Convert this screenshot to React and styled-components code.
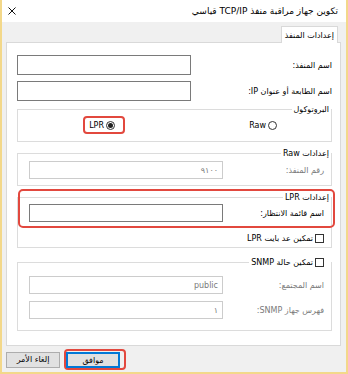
import React from 'react'
import styled, { createGlobalStyle } from 'styled-components'

const Global = createGlobalStyle`
  html, body {
    margin: 0;
    padding: 0;
    background: #ffffff;
    overflow: hidden;
  }
  * { box-sizing: border-box; }
`

const FONT = `Tahoma, "DejaVu Sans", "Liberation Sans", sans-serif`

export default function App() {
  return (
    <>
      <Global />
      <Window dir="rtl">
        <TitleBar>
          <Title>تكوين جهاز مراقبة منفذ TCP/IP قياسي</Title>
          <svg width="8" height="8" viewBox="0 0 8 8">
            <path d="M0.5 0.5 L7.5 7.5 M7.5 0.5 L0.5 7.5" stroke="#111" strokeWidth="1" />
          </svg>
        </TitleBar>

        <Body>
          <TabStrip>
            <Tab>إعدادات المنفذ</Tab>
          </TabStrip>

          <Panel>
            <FieldRow>
              <Label>اسم المنفذ:</Label>
              <TextBox />
            </FieldRow>
            <FieldRow $top={6}>
              <Label>اسم الطابعة أو عنوان IP:</Label>
              <TextBox />
            </FieldRow>

            <Group $top={2}>
              <Legend>البروتوكول</Legend>
              <RadioRow>
                <Choice>
                  <Radio />
                  <span>Raw</span>
                </Choice>
                <Choice $highlight>
                  <Radio $checked />
                  <span>LPR</span>
                </Choice>
              </RadioRow>
            </Group>

            <Group $top={5}>
              <Legend>إعدادات Raw</Legend>
              <GroupBody $pt={1} $pb={6}>
                <FieldRow>
                  <Label $disabled>رقم المنفذ:</Label>
                  <TextBox $small $disabled>٩١٠٠</TextBox>
                </FieldRow>
              </GroupBody>
            </Group>

            <Marked>
              <Group $top={5}>
                <Legend>إعدادات LPR</Legend>
                <GroupBody $pt={0} $pb={2}>
                  <FieldRow>
                    <Label>اسم قائمة الانتظار:</Label>
                    <TextBox $small />
                  </FieldRow>
                  <CheckRow>
                    <Check />
                    <span>تمكين عد بايت LPR</span>
                  </CheckRow>
                </GroupBody>
              </Group>
              <MarkBox />
            </Marked>

            <Group $top={8}>
              <Legend $check>
                <Check />
                <span>تمكين حالة SNMP</span>
              </Legend>
              <GroupBody $pt={7} $pb={11}>
                <FieldRow>
                  <Label $disabled>اسم المجتمع:</Label>
                  <TextBox $small $disabled>public</TextBox>
                </FieldRow>
                <FieldRow $top={7}>
                  <Label $disabled>فهرس جهاز SNMP:</Label>
                  <TextBox $small $disabled>١</TextBox>
                </FieldRow>
              </GroupBody>
            </Group>
          </Panel>

          <ButtonBar>
            <ButtonMark>
              <Button $default>موافق</Button>
            </ButtonMark>
            <Button>إلغاء الأمر</Button>
          </ButtonBar>
        </Body>
      </Window>
    </>
  )
}

const Window = styled.div`
  width: 348px;
  height: 374px;
  display: flex;
  flex-direction: column;
  direction: rtl;
  border: 2px solid #f3d88a;
  border-top: none;
  font-family: ${FONT};
  font-size: 8px;
  color: #000;
`

const TitleBar = styled.div`
  height: 22px;
  flex: none;
  background: #fff;
  display: flex;
  align-items: center;
  justify-content: space-between;
  padding: 0 8px 0 6px;
`

const Title = styled.div`
  font-size: 9px;
  color: #000;
`

const Body = styled.div`
  flex: 1;
  background: #f0f0f0;
  padding: 4px 5px 0 4px;
  display: flex;
  flex-direction: column;
`

const TabStrip = styled.div`
  display: flex;
  padding-right: 3px;
`

const Tab = styled.div`
  height: 17px;
  margin-bottom: -1px;
  padding: 0 3px;
  background: #fff;
  border: 1px solid #d9d9d9;
  border-bottom: none;
  display: flex;
  align-items: center;
  white-space: nowrap;
  position: relative;
  z-index: 1;
`

const Panel = styled.div`
  height: 304px;
  background: #fff;
  border: 1px solid #d9d9d9;
  padding: 12px 8px 0 10px;
  display: flex;
  flex-direction: column;
`

const FieldRow = styled.div`
  display: flex;
  align-items: center;
  justify-content: space-between;
  margin-top: ${p => p.$top || 0}px;
`

const Label = styled.span`
  color: ${p => (p.$disabled ? '#7a7a7a' : '#000')};
  white-space: nowrap;
`

const TextBox = styled.div`
  width: ${p => (p.$small ? 194 : 174)}px;
  height: ${p => (p.$small ? 18 : 20)}px;
  background: #fff;
  border: 1px solid ${p => (p.$disabled ? '#cccccc' : '#7a7a7a')};
  color: #7a7a7a;
  display: flex;
  align-items: center;
  padding: 0 4px;
`

const Group = styled.fieldset`
  margin: ${p => p.$top || 0}px 0 0 0;
  padding: 0;
  border: 1px solid #dcdcdc;
  min-inline-size: 0;
`

const Legend = styled.legend`
  line-height: 13px;
  padding: ${p => (p.$check ? '0 7px 0 2px' : '0 2px')};
  margin: 0;
  display: flex;
  align-items: center;
  gap: 2px;
`

const GroupBody = styled.div`
  padding: ${p => p.$pt}px 7px ${p => p.$pb}px 11px;
`

const RadioRow = styled.div`
  display: grid;
  grid-template-columns: 162px auto;
  justify-items: start;
  padding: 0 44px 7px 0;
`

const Choice = styled.span`
  height: 18px;
  display: inline-flex;
  align-items: center;
  gap: 2px;
  padding: 0 8px 0 4px;
  border: 2px solid ${p => (p.$highlight ? '#e2483e' : 'transparent')};
  border-radius: 4px;
`

const Radio = styled.span`
  width: 9px;
  height: 9px;
  border: 1px solid #333;
  border-radius: 50%;
  display: inline-flex;
  align-items: center;
  justify-content: center;

  &::after {
    content: '';
    display: ${p => (p.$checked ? 'block' : 'none')};
    width: 5px;
    height: 5px;
    border-radius: 50%;
    background: #222;
  }
`

const Check = styled.span`
  width: 9px;
  height: 9px;
  border: 1px solid #333;
  background: #fff;
  flex: none;
`

const CheckRow = styled.div`
  height: 14px;
  margin-top: 9px;
  display: flex;
  align-items: center;
  gap: 2px;
`

const Marked = styled.div`
  position: relative;
`

const MarkBox = styled.div`
  position: absolute;
  top: 3px;
  left: 1px;
  right: -3px;
  height: 39px;
  border: 2px solid #e2483e;
  border-radius: 5px;
  pointer-events: none;
`

const ButtonBar = styled.div`
  display: flex;
  justify-content: flex-end;
  align-items: center;
  gap: 4px;
  padding: 3px 3px 0 0;
`

const ButtonMark = styled.span`
  display: inline-flex;
  padding: 1px 4px 0 0;
  border: 2px solid #e2483e;
  border-radius: 4px;
`

const Button = styled.button`
  width: 54px;
  height: 16px;
  padding: 0;
  font-family: ${FONT};
  font-size: 8px;
  color: #000;
  background: #e1e1e1;
  border: ${p => (p.$default ? '2px solid #0078d7' : '1px solid #adadad')};
`
